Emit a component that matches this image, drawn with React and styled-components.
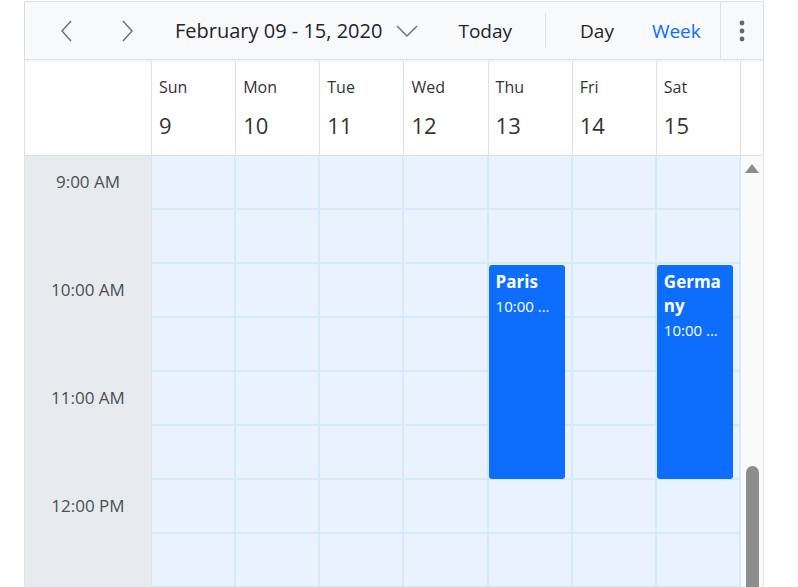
import React from 'react';
import styled, { createGlobalStyle } from 'styled-components';

const GlobalStyle = createGlobalStyle`
  html, body {
    margin: 0;
    padding: 0;
    background: #ffffff;
    font-family: "Open Sans", "Noto Sans", sans-serif;
    overflow: hidden;
  }
`;

const SLOT = 54;
const DAYS = [
  { name: 'Sun', num: 9 },
  { name: 'Mon', num: 10 },
  { name: 'Tue', num: 11 },
  { name: 'Wed', num: 12 },
  { name: 'Thu', num: 13 },
  { name: 'Fri', num: 14 },
  { name: 'Sat', num: 15 },
];
const HOURS = ['9:00 AM', '10:00 AM', '11:00 AM', '12:00 PM'];
const EVENTS = [
  { title: 'Paris', time: '10:00 ...', day: 4, start: 2, slots: 4 },
  { title: 'Germany', time: '10:00 ...', day: 6, start: 2, slots: 4 },
];

const Scheduler = styled.div`
  margin: 1px 0 0 24px;
  width: 740px;
  height: 620px;
  box-sizing: border-box;
  border: 1px solid #dee2e6;
  display: flex;
  flex-direction: column;
  color: #212529;
`;

const Toolbar = styled.div`
  height: 57px;
  flex: none;
  display: flex;
  align-items: center;
  background: #f8f9fa;
  border-bottom: 1px solid #dee2e6;
  box-shadow: 0 1px 2px rgba(0, 0, 0, 0.08);
  position: relative;
  z-index: 1;
`;

const IconButton = styled.button`
  width: 40px;
  height: 40px;
  margin-left: ${(p) => p.$ml || 0}px;
  padding: 0;
  border: 0;
  background: none;
  display: flex;
  align-items: center;
  justify-content: center;
  color: #6c757d;
`;

const DateButton = styled.button`
  margin-left: 28px;
  padding: 0;
  border: 0;
  background: none;
  display: flex;
  align-items: center;
  gap: 14px;
  font: inherit;
  font-size: 20px;
  color: #212529;
`;

const TextButton = styled.button`
  margin-left: ${(p) => p.$ml}px;
  padding: 0;
  border: 0;
  background: none;
  font: inherit;
  font-size: 19px;
  color: ${(p) => (p.$active ? '#0d6efd' : '#212529')};
`;

const Divider = styled.div`
  width: 1px;
  height: 35px;
  margin-left: 33px;
  background: #dee2e6;
`;

const MoreSection = styled.div`
  margin-left: auto;
  width: 42px;
  align-self: stretch;
  border-left: 1px solid #dee2e6;
  display: flex;
  align-items: center;
  justify-content: center;
`;

const HeaderRow = styled.div`
  flex: none;
  display: grid;
  grid-template-columns: 127px repeat(7, 1fr) 22px;
  height: 94px;
  border-bottom: 1px solid #dee2e6;
  margin-top: 1px;
  background: #fff;
`;

const Corner = styled.div`
  border-right: 1px solid #dee2e6;
`;

const DayHead = styled.div`
  border-right: 1px solid #dee2e6;
  padding: 15px 0 0 7px;
  display: flex;
  flex-direction: column;
  color: #333;
`;

const DayName = styled.span`
  font-size: 16px;
  line-height: 22px;
`;

const DayNum = styled.span`
  margin-top: 13px;
  font-size: 22px;
  line-height: 28px;
`;

const Body = styled.div`
  flex: 1;
  display: grid;
  grid-template-columns: 127px 1fr 22px;
  overflow: hidden;
`;

const TimeColumn = styled.div`
  background: #e8ebee;
  border-right: 1px solid #dee2e6;
`;

const TimeSlot = styled.div`
  height: ${SLOT * 2}px;
  display: flex;
  justify-content: center;
  padding-top: 15px;
  box-sizing: border-box;
  font-size: 17px;
  line-height: 22px;
  color: #4a4f55;
`;

const Grid = styled.div`
  position: relative;
  display: grid;
  grid-template-columns: repeat(7, 1fr);
  grid-auto-rows: ${SLOT}px;
  align-content: start;
`;

const Cell = styled.div`
  background: #eaf2fd;
  border-right: 2px solid #d2ebfb;
  border-bottom: 2px solid #d2ebfb;
`;

const Event = styled.div`
  position: absolute;
  box-sizing: border-box;
  background: #0d6efd;
  border-radius: 3px;
  color: #fff;
  padding: 5px 7px;
  overflow: hidden;
`;

const EventTitle = styled.div`
  font-size: 17px;
  font-weight: 700;
  line-height: 24px;
  word-break: break-all;
`;

const EventTime = styled.div`
  font-size: 15px;
  line-height: 24px;
`;

const ScrollGutter = styled.div`
  background: #fafafa;
  display: flex;
  flex-direction: column;
  align-items: center;
  padding-top: 8px;
`;

const Thumb = styled.div`
  margin-top: auto;
  width: 13px;
  height: 194px;
  margin-bottom: -40px;
  border-radius: 7px;
  background: #8d8d8d;
`;

const Chevron = ({ d }) => (
  <svg width="16" height="24" viewBox="0 0 16 24" fill="none" stroke="#6c757d" strokeWidth="1.5">
    <path d={d} />
  </svg>
);

const ChevronDown = () => (
  <svg width="22" height="14" viewBox="0 0 22 14" fill="none" stroke="#6c757d" strokeWidth="1.5">
    <path d="M1 2 L11 12 L21 2" />
  </svg>
);

const Dots = () => (
  <svg width="6" height="22" viewBox="0 0 6 22" fill="#666">
    <circle cx="3" cy="3" r="2.4" />
    <circle cx="3" cy="11" r="2.4" />
    <circle cx="3" cy="19" r="2.4" />
  </svg>
);

const ArrowUp = () => (
  <svg width="14" height="10" viewBox="0 0 14 10" fill="#8d8d8d">
    <path d="M7 0 L14 9 L0 9 Z" />
  </svg>
);

export default function App() {
  const rows = HOURS.length * 2;
  return (
    <>
      <GlobalStyle />
      <Scheduler>
        <Toolbar>
          <IconButton $ml={22}><Chevron d="M12 2 L3 12 L12 22" /></IconButton>
          <IconButton $ml={20}><Chevron d="M4 2 L13 12 L4 22" /></IconButton>
          <DateButton>
            February 09 - 15, 2020
            <ChevronDown />
          </DateButton>
          <TextButton $ml={40}>Today</TextButton>
          <Divider />
          <TextButton $ml={34}>Day</TextButton>
          <TextButton $ml={38} $active>Week</TextButton>
          <MoreSection><Dots /></MoreSection>
        </Toolbar>
        <HeaderRow>
          <Corner />
          {DAYS.map((d) => (
            <DayHead key={d.name}>
              <DayName>{d.name}</DayName>
              <DayNum>{d.num}</DayNum>
            </DayHead>
          ))}
          <div />
        </HeaderRow>
        <Body>
          <TimeColumn>
            {HOURS.map((h) => (
              <TimeSlot key={h}>{h}</TimeSlot>
            ))}
          </TimeColumn>
          <Grid>
            {Array.from({ length: rows * 7 }).map((_, i) => (
              <Cell key={i} />
            ))}
            {EVENTS.map((e) => (
              <Event
                key={e.title}
                style={{
                  left: `${(e.day * 100) / 7}%`,
                  width: `calc(${100 / 7}% - 8px)`,
                  top: e.start * SLOT + 1,
                  height: e.slots * SLOT - 2,
                }}
              >
                <EventTitle>{e.title}</EventTitle>
                <EventTime>{e.time}</EventTime>
              </Event>
            ))}
          </Grid>
          <ScrollGutter>
            <ArrowUp />
            <Thumb />
          </ScrollGutter>
        </Body>
      </Scheduler>
    </>
  );
}
